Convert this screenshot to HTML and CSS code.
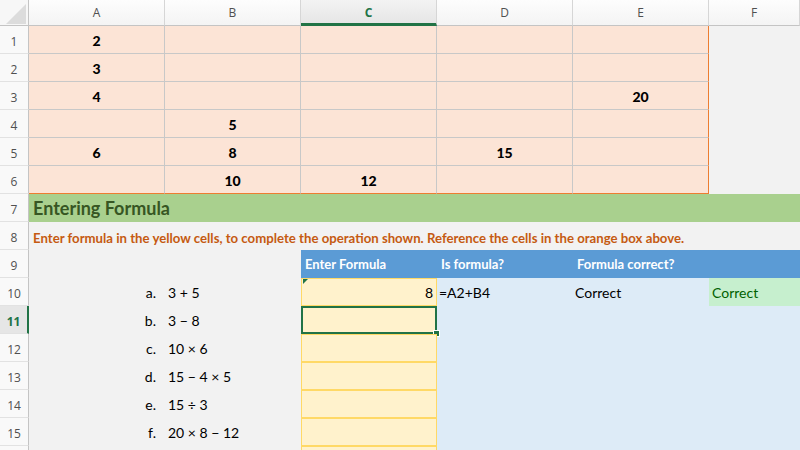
FILE: index.html
```html
<!DOCTYPE html>
<html>
<head>
<meta charset="utf-8">
<link rel="stylesheet" href="styles.css">
</head>
<body>
<div class="sheet">
  <!-- column headers -->
  <div class="corner"><svg width="20" height="20" viewBox="0 0 20 20"><polygon points="20,0 20,20 0,20" fill="#dcdcdc"/></svg></div>
  <div class="hd">A</div>
  <div class="hd">B</div>
  <div class="hd sel">C</div>
  <div class="hd">D</div>
  <div class="hd">E</div>
  <div class="hd">F</div>

  <!-- reference block -->
  <div class="rh">1</div>
  <div class="pk">2</div><div class="pk"></div><div class="pk"></div><div class="pk"></div><div class="pk last"></div><div class="gy"></div>
  <div class="rh">2</div>
  <div class="pk">3</div><div class="pk"></div><div class="pk"></div><div class="pk"></div><div class="pk last"></div><div class="gy"></div>
  <div class="rh">3</div>
  <div class="pk">4</div><div class="pk"></div><div class="pk"></div><div class="pk"></div><div class="pk last">20</div><div class="gy"></div>
  <div class="rh">4</div>
  <div class="pk"></div><div class="pk">5</div><div class="pk"></div><div class="pk"></div><div class="pk last"></div><div class="gy"></div>
  <div class="rh">5</div>
  <div class="pk">6</div><div class="pk">8</div><div class="pk"></div><div class="pk">15</div><div class="pk last"></div><div class="gy"></div>
  <div class="rh">6</div>
  <div class="pk bot"></div><div class="pk bot">10</div><div class="pk bot">12</div><div class="pk bot"></div><div class="pk bot last"></div><div class="gy"></div>

  <!-- section title -->
  <div class="rh">7</div>
  <div class="title">Entering Formula</div>
  <div class="rh">8</div>
  <div class="note">Enter formula in the yellow cells, to complete the operation shown. Reference the cells in the orange box above.</div>

  <!-- exercise table -->
  <div class="rh">9</div>
  <div class="gy wide"></div>
  <div class="th">Enter Formula</div><div class="th">Is formula?</div><div class="th">Formula correct?</div><div class="th"></div>

  <div class="rh">10</div>
  <div class="gy lbl">a.</div><div class="gy expr">3 + 5</div>
  <div class="yl num"><span class="flag"></span>8</div><div class="lb">=A2+B4</div><div class="lb">Correct</div><div class="ok">Correct</div>

  <div class="rh sel">11</div>
  <div class="gy lbl">b.</div><div class="gy expr">3 − 8</div>
  <div class="yl active"><span class="handle"></span></div><div class="lb"></div><div class="lb"></div><div class="lb"></div>

  <div class="rh">12</div>
  <div class="gy lbl">c.</div><div class="gy expr">10 × 6</div>
  <div class="yl"></div><div class="lb"></div><div class="lb"></div><div class="lb"></div>

  <div class="rh">13</div>
  <div class="gy lbl">d.</div><div class="gy expr">15 − 4 × 5</div>
  <div class="yl"></div><div class="lb"></div><div class="lb"></div><div class="lb"></div>

  <div class="rh">14</div>
  <div class="gy lbl">e.</div><div class="gy expr">15 ÷ 3</div>
  <div class="yl"></div><div class="lb"></div><div class="lb"></div><div class="lb"></div>

  <div class="rh">15</div>
  <div class="gy lbl">f.</div><div class="gy expr">20 × 8 − 12</div>
  <div class="yl"></div><div class="lb"></div><div class="lb"></div><div class="lb"></div>

  <div class="rh"></div>
  <div class="gy"></div><div class="gy"></div>
  <div class="yl"></div><div class="lb"></div><div class="lb"></div><div class="lb"></div>
</div>
</body>
</html>
```
FILE: styles.css
```css
html, body {
  margin: 0;
  padding: 0;
  background: #f2f2f2;
  overflow: hidden;
}

.sheet {
  width: 800px;
  height: 450px;
  overflow: hidden;
  display: grid;
  grid-template-columns: 29px repeat(5, 136px) 1fr;
  grid-template-rows: 26px;
  grid-auto-rows: 28px;
  font-family: Lato, "Open Sans", sans-serif;
  font-size: 14px;
  color: #000;
}

.sheet > div {
  box-sizing: border-box;
  display: flex;
  align-items: flex-end;
  padding-bottom: 5px;
  white-space: nowrap;
  min-width: 0;
}

/* headers */
.corner {
  background: #f7f7f7;
  border-right: 1px solid #c4c4c4;
  border-bottom: 1px solid #c4c4c4;
  justify-content: flex-end;
  padding: 0 2px 1px 0 !important;
}

.hd {
  background: linear-gradient(#fdfdfd, #f4f4f4);
  border-right: 1px solid #d6d6d6;
  border-bottom: 1px solid #c4c4c4;
  justify-content: center;
  align-items: center !important;
  padding: 0 !important;
  font-family: "Open Sans", sans-serif;
  font-size: 12px;
  color: #505050;
}
.hd.sel {
  background: linear-gradient(#f3f3f3, #e6e6e6);
  border-bottom: 3px solid #217346;
  color: #217346;
  font-weight: 700;
  padding-top: 2px !important;
}

.rh {
  background: #f9f9f9;
  border-right: 1px solid #c4c4c4;
  border-bottom: 1px solid #e2e2e2;
  justify-content: center;
  font-family: "Open Sans", sans-serif;
  font-size: 12px;
  color: #505050;
  padding-bottom: 3px !important;
}
.rh.sel {
  background: #e6e6e6;
  border-right: 2px solid #217346;
  color: #217346;
  font-weight: 700;
}

/* reference block */
.pk {
  background: #fce4d6;
  border-right: 1px solid #c8c8c8;
  border-bottom: 1px solid #c8c8c8;
  justify-content: center;
  font-weight: 900;
  font-size: 14px;
  padding-bottom: 4px !important;
}
.pk.last { border-right: 1px solid #ed7d31; }
.pk.bot { border-bottom: 1px solid #ed7d31; }

.gy { background: #f2f2f2; }
.gy.wide { grid-column: span 2; }

.title {
  grid-column: span 6;
  background: #a9d08e;
  color: #375623;
  font-weight: 700;
  font-size: 18px;
  padding: 0 0 3px 4px !important;
}

.note {
  grid-column: span 6;
  background: #f2f2f2;
  color: #c55a11;
  font-weight: 700;
  font-size: 13.2px;
  padding: 0 0 4px 4px !important;
}

.th {
  background: #5b9bd5;
  color: #fff;
  font-weight: 700;
  font-size: 13px;
  padding: 0 0 6px 4px !important;
}

.lbl {
  justify-content: flex-end;
  padding-right: 9px;
}
.expr { padding-left: 3px; }

.yl {
  position: relative;
  background: #fff2cc;
  box-shadow: inset 0 0 0 1px #ffd966;
}
.yl.num {
  justify-content: flex-end;
  padding-right: 4px;
}
.yl.active {
  box-shadow: inset 0 0 0 2px #217346;
}

.flag {
  position: absolute;
  left: 2px;
  top: 1px;
  width: 0;
  height: 0;
  border-top: 5px solid #217346;
  border-right: 5px solid transparent;
}

.handle {
  position: absolute;
  right: -3px;
  bottom: -3px;
  width: 5px;
  height: 5px;
  background: #217346;
  border: 1px solid #fff;
}

.lb {
  background: #ddebf7;
  padding-left: 2px;
}

.ok {
  background: #c6efce;
  color: #006100;
  padding-left: 3px;
}
```
